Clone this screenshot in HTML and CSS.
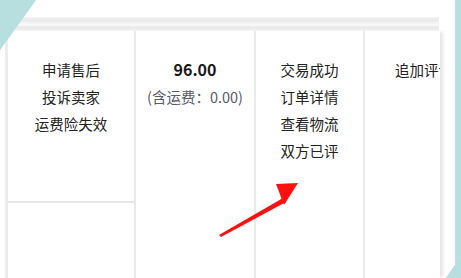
FILE: index.html
```html
<!DOCTYPE html>
<html lang="zh-CN">
<head>
    <meta charset="UTF-8">
    <title>订单</title>
    <link rel="stylesheet" href="styles.css">
</head>
<body>

<div class="screen">
    <div class="sheet">
        <div class="rule"></div>
        <div class="order-table">
            <div class="col col-service">
                <div class="cell cell-top">
                    <p>申请售后</p>
                    <p>投诉卖家</p>
                    <p>运费险失效</p>
                </div>
                <div class="cell"></div>
            </div>
            <div class="col col-price">
                <p class="price">96.00</p>
                <p class="freight">(含运费：0.00)</p>
            </div>
            <div class="col col-status">
                <p>交易成功</p>
                <p>订单详情</p>
                <p>查看物流</p>
                <p>双方已评</p>
            </div>
            <div class="col col-action">
                <p>追加评论</p>
            </div>
        </div>
    </div>
    <div class="edge"></div>

    <div class="corner"></div>
    <div class="curl"></div>

    <svg class="arrow" width="90" height="60" viewBox="0 0 90 60">
        <polygon points="2,55 66,18 69,22 4,57" fill="#ff1010"/>
        <polygon points="59,4 81,3 67,25" fill="#ff1010"/>
    </svg>
</div>

</body>
</html>
```

FILE: styles.css
```css
html, body {
    margin: 0;
    padding: 0;
}
body {
    font-family: "Noto Sans CJK SC", "Liberation Sans", sans-serif;
    color: #222;
    background: #fff;
}
p {
    margin: 0;
}
.screen {
    position: relative;
    width: 461px;
    height: 278px;
    overflow: hidden;
    display: flex;
}
.sheet {
    flex: 1;
    min-width: 0;
    padding-top: 17px;
}
.edge {
    width: 6px;
    background-color: #d0ebeb;
    background-image: radial-gradient(#b7dfe0 0.8px, transparent 1px);
    background-size: 2px 2px;
}
.rule {
    margin: 0 16px 0 8px;
    height: 14px;
    background: linear-gradient(#f4f4f4 0, #e9e9e9 3px, #f3f3f3 6px, #fbfbfb 8px, #e8e8e8 10px, #ececec 12px, #fafafa 14px);
}
.order-table {
    display: flex;
    width: 432px;
    height: 247px;
    margin-left: 5px;
    overflow: hidden;
    border-left: 3px solid #ececec;
    box-shadow: 4px 0 3px -1px #e6e6e6;
    font-size: 14.5px;
    line-height: 27px;
    text-align: center;
}
.col {
    flex: none;
    box-sizing: border-box;
    padding-top: 25px;
    border-right: 2px solid #eaeaea;
}
.col-service {
    width: 128px;
    padding-top: 0;
    display: flex;
    flex-direction: column;
}
.cell {
    flex: 1;
}
.cell-top {
    flex: none;
    height: 172px;
    box-sizing: border-box;
    padding-top: 25px;
    border-bottom: 2px solid #e8e8e8;
}
.col-price {
    width: 120px;
}
.price {
    font-size: 16px;
    font-weight: bold;
    color: #1a1a1a;
}
.freight {
    color: #5a5a66;
}
.col-status {
    width: 109px;
}
.col-action {
    width: 118px;
    border-right: none;
}
.corner {
    position: absolute;
    left: 0;
    top: 0;
    width: 36px;
    height: 50px;
    clip-path: polygon(0 0, 100% 0, 0 100%);
    background-color: #d0ebeb;
    background-image: radial-gradient(#b7dfe0 0.8px, transparent 1px);
    background-size: 2px 2px;
}
.curl {
    position: absolute;
    right: 0;
    bottom: 0;
    width: 15px;
    height: 22px;
    clip-path: polygon(100% 0, 100% 100%, 0 100%);
    background-color: #d0ebeb;
    background-image: radial-gradient(#b7dfe0 0.8px, transparent 1px);
    background-size: 2px 2px;
}
.arrow {
    position: absolute;
    left: 217px;
    top: 180px;
}
```
